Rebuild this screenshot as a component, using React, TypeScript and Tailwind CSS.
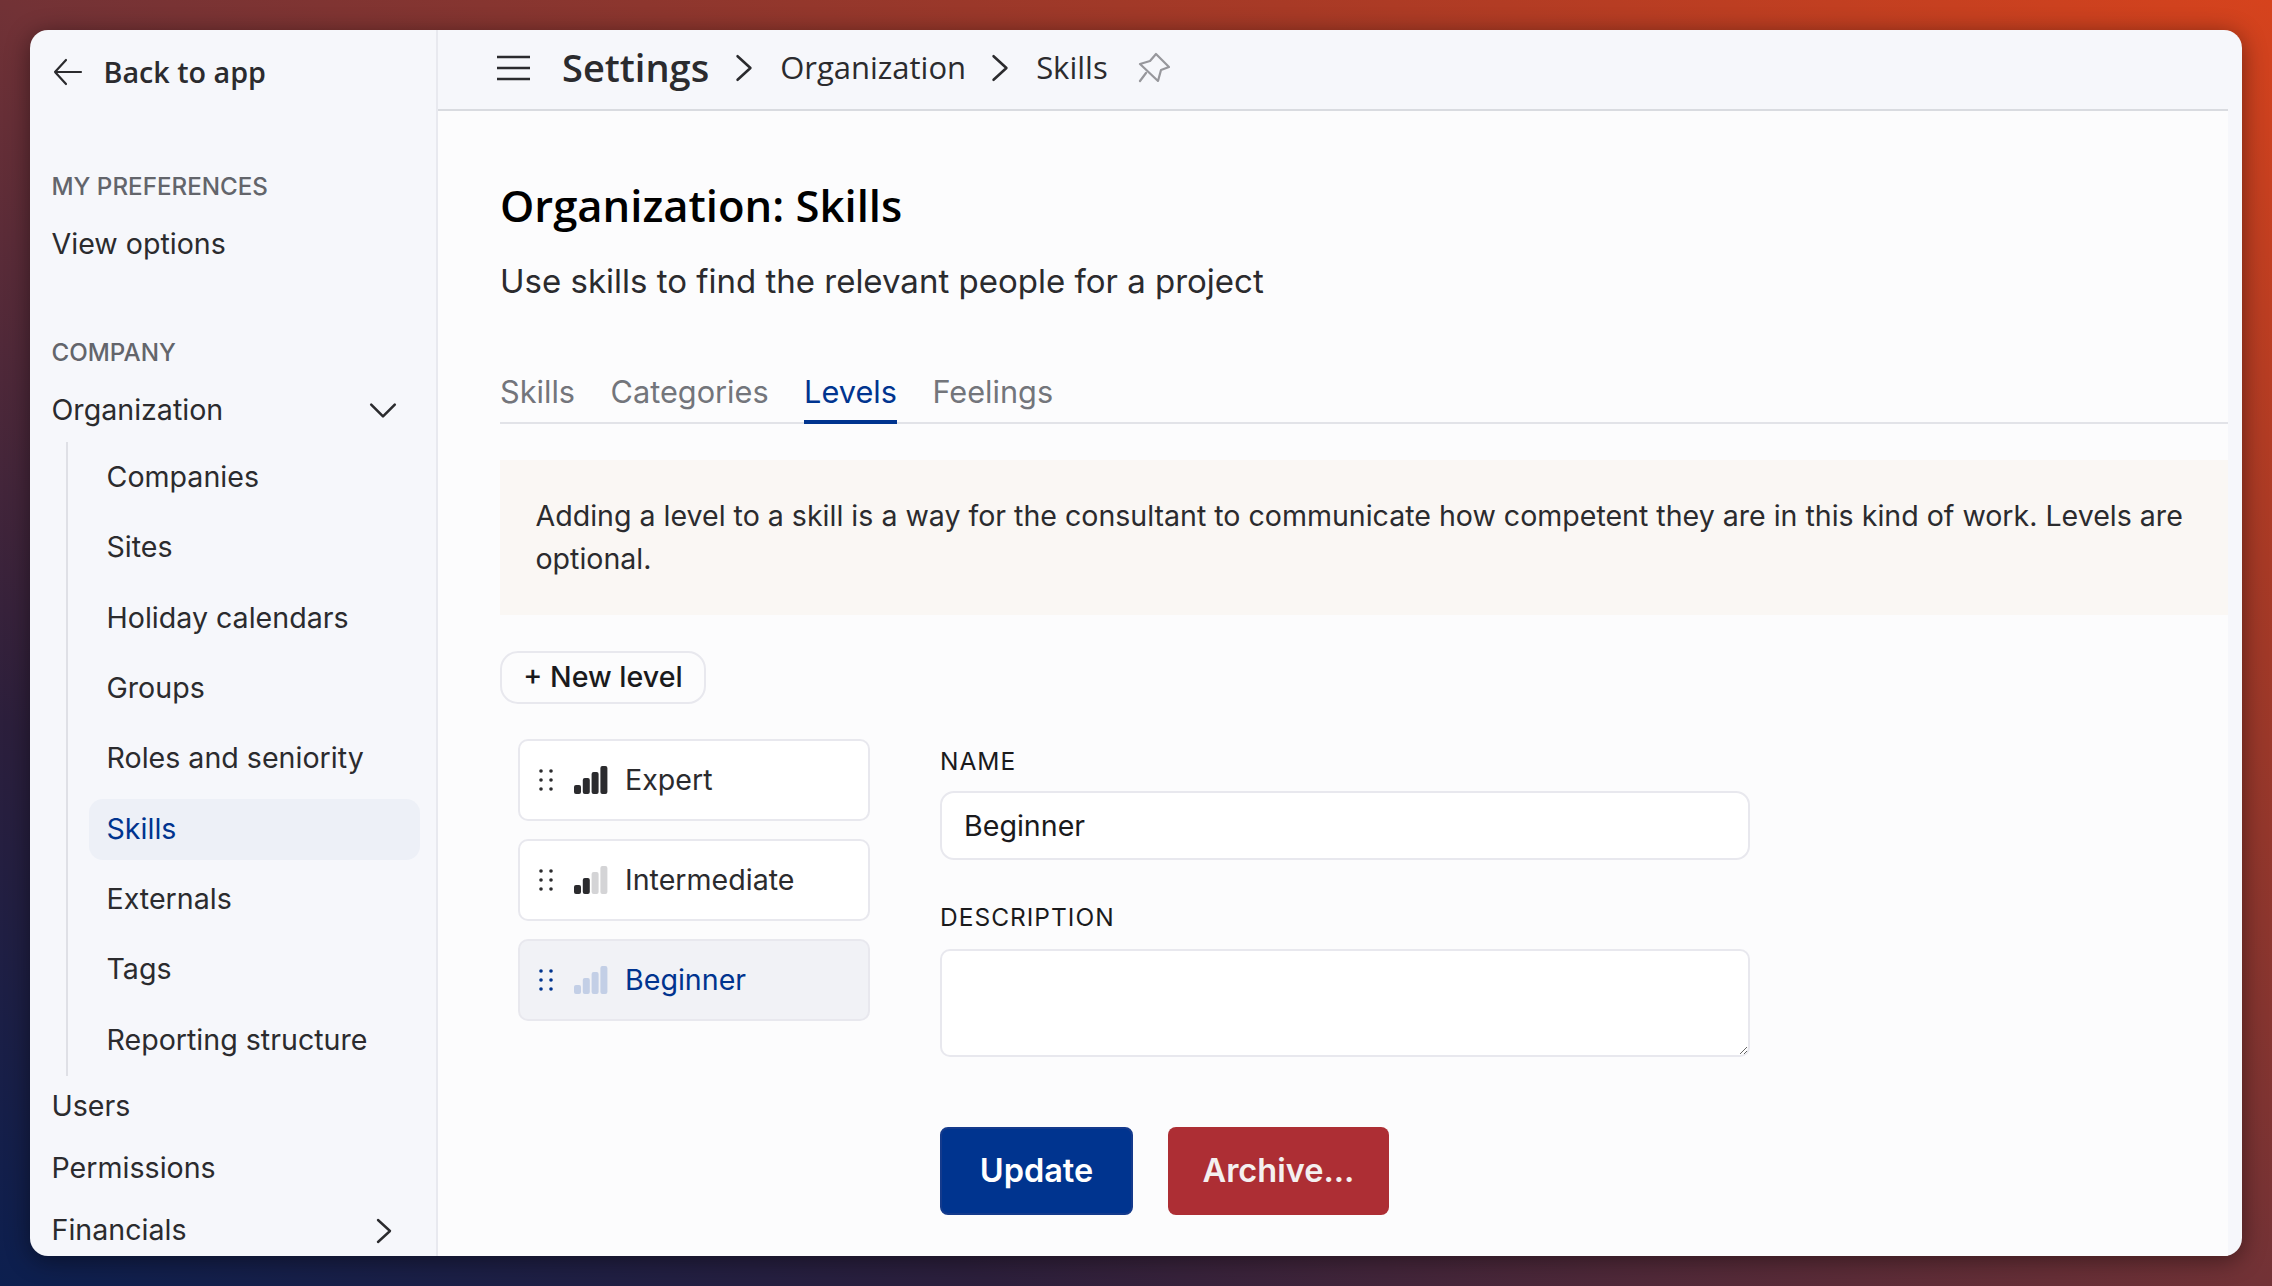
const sans = "font-['Inter',sans-serif]";
const plex = "font-['Open_Sans',sans-serif]";

function Chevron({ dir, className }: { dir: "right" | "down"; className?: string }) {
  return (
    <svg className={className} width="28" height="28" viewBox="0 0 28 28" fill="none" stroke="currentColor" strokeWidth="2.4" strokeLinecap="round" strokeLinejoin="round">
      {dir === "right" ? <path d="M8 3l12 11L8 25" /> : <path d="M3 9l11 11 11-11" />}
    </svg>
  );
}

function NavItem({ label, active }: { label: string; active?: boolean }) {
  return (
    <div className="h-[70.4px] flex items-center">
      <div className={`w-[331px] h-[61px] rounded-[14px] pl-[18px] flex items-center ${active ? "bg-[#edf0f7] text-[#00348f]" : ""}`}>{label}</div>
    </div>
  );
}

function Bars({ level, on, off }: { level: number; on: string; off: string }) {
  const heights = [9, 16, 22, 28];
  return (
    <svg width="34" height="28" viewBox="0 0 34 28" className="shrink-0">
      {heights.map((h, i) => (
        <rect key={i} x={i * 8.8} y={28 - h} width="7" height={h} rx="2" fill={i < level ? on : off} />
      ))}
    </svg>
  );
}

function Grip({ color }: { color: string }) {
  return (
    <svg width="14" height="22" viewBox="0 0 14 22" fill={color} className="shrink-0">
      {[2, 11, 20].map((y) => (
        <g key={y}>
          <circle cx="2" cy={y} r="1.8" />
          <circle cx="12" cy={y} r="1.8" />
        </g>
      ))}
    </svg>
  );
}

function LevelRow({ label, level, on, off, active }: { label: string; level: number; on: string; off: string; active?: boolean }) {
  return (
    <div className={`h-[82px] rounded-[10px] border-2 border-[#e8e8ee] flex items-center pl-[19px] ${active ? "bg-[#f1f2f6] text-[#00348f]" : "bg-white text-[#2b2b2e]"}`}>
      <Grip color={active ? "#00348f" : "#2b2b2e"} />
      <div className="ml-[21px] mr-[17px] flex"><Bars level={level} on={on} off={off} /></div>
      <span>{label}</span>
    </div>
  );
}

export default function App() {
  return (
    <div className={`w-[2272px] h-[1286px] p-[30px] overflow-hidden bg-[linear-gradient(to_top_right,#0c1f4f_0%,#2c1f3c_22%,#723236_50%,#a83a26_78%,#d6431d_100%)] text-[28.6px] text-[#2b2b2e] ${sans}`}>
      <div className="flex h-full rounded-[18px] overflow-hidden bg-[#f6f7fb] shadow-[0_4px_24px_rgba(0,0,0,0.45)]">
        {/* Sidebar */}
        <aside className="w-[408px] shrink-0 border-r-2 border-[#e8e9ef] overflow-hidden pl-[21.5px] pr-[18px]">
          <div className="h-[84px] flex items-center">
            <svg width="30" height="28" viewBox="0 0 30 28" fill="none" stroke="#2b2b2e" strokeWidth="2.2" strokeLinecap="round" strokeLinejoin="round" className="ml-[1px]">
              <path d="M28 14H2M13 2L2 14l11 12" />
            </svg>
            <span className={`ml-[21px] text-[28.7px] font-semibold ${plex}`}>Back to app</span>
          </div>
          <div className="mt-[57px] text-[24.2px] font-medium text-[#63656b] h-[32px] flex items-center">MY PREFERENCES</div>
          <div className="mt-[19px] h-[44px] flex items-center">View options</div>
          <div className="mt-[71px] text-[24.2px] font-medium text-[#63656b] h-[32px] flex items-center">COMPANY</div>
          <div className="mt-[13px] h-[56px] flex items-center justify-between pr-[20px]">
            Organization
            <Chevron dir="down" className="w-[30px] h-[30px]" />
          </div>
          <div className="ml-[14px] border-l-2 border-[#dfe0e6] pl-[21px] mt-[4px] -mr-[18px]">
            {["Companies", "Sites", "Holiday calendars", "Groups", "Roles and seniority"].map((l) => (
              <NavItem key={l} label={l} />
            ))}
            <NavItem label="Skills" active />
            {["Externals", "Tags", "Reporting structure"].map((l) => (
              <NavItem key={l} label={l} />
            ))}
          </div>
          <div className="h-[62px] flex items-center">Users</div>
          <div className="h-[62px] flex items-center">Permissions</div>
          <div className="h-[62px] flex items-center justify-between pr-[20px]">
            Financials
            <Chevron dir="right" />
          </div>
        </aside>

        {/* Right side */}
        <div className="flex-1 min-w-0 flex flex-col pr-[14px]">
          <header className="h-[81px] shrink-0 border-b-2 border-[#d9dbe0] flex items-center pl-[59px] pb-[4px]">
            <svg width="33" height="26" viewBox="0 0 33 26" fill="none" stroke="#2b2b2e" strokeWidth="2.6">
              <path d="M0 2h33M0 13h33M0 24h33" />
            </svg>
            <span className={`ml-[32px] text-[38px] font-semibold ${plex}`}>Settings</span>
            <Chevron dir="right" className="ml-[20px] w-[30px] h-[30px]" />
            <span className={`ml-[21px] text-[31px] ${plex}`}>Organization</span>
            <Chevron dir="right" className="ml-[19px] w-[30px] h-[30px]" />
            <span className={`ml-[21px] text-[31px] ${plex}`}>Skills</span>
            <svg width="32" height="31" viewBox="10 6 32 31" fill="none" stroke="#97979c" strokeWidth="2.2" strokeLinejoin="round" strokeLinecap="round" className="ml-[30px]">
              <path d="M28 8l13 13-8 3-3 11-18-17 10-3zM12 35l6-8" />
            </svg>
          </header>

          <main className="flex-1 min-h-0 bg-[#fcfcfd] pl-[62px] overflow-hidden">
            <h1 className={`mt-[66px] text-[43.6px] leading-[56px] font-semibold text-black ${plex}`}>Organization: Skills</h1>
            <p className="mt-[26px] text-[33px] leading-[44px]">Use skills to find the relevant people for a project</p>

            <div className="mt-[58px] h-[63px] flex gap-[35.5px] border-b-2 border-[#e2e3e8] text-[30.7px] text-[#73757b]">
              <span className="h-[63px] flex items-center">Skills</span>
              <span className="h-[63px] flex items-center">Categories</span>
              <span className="h-[63px] flex items-center text-[#00348f] border-b-4 border-[#00348f] pt-[4px]">Levels</span>
              <span className="h-[63px] flex items-center">Feelings</span>
            </div>

            <div className="mt-[36px] h-[155px] bg-[#faf7f4] pl-[35.5px] pr-[30px] pb-[2px] flex items-center leading-[43px] text-[#2b2b2e] text-[28.56px]">
              Adding a level to a skill is a way for the consultant to communicate how competent they are in this kind of work. Levels are optional.
            </div>

            <button className="mt-[36px] h-[53px] w-[206px] rounded-[18px] border-2 border-[#e8e8ee] font-medium text-[#1a1a1c] block">+ New level</button>

            <div className="flex mt-[35px]">
              <div className="ml-[18px] w-[352px] flex flex-col gap-[18px]">
                <LevelRow label="Expert" level={4} on="#2b2b2e" off="#d4d4d6" />
                <LevelRow label="Intermediate" level={2} on="#2b2b2e" off="#d4d4d6" />
                <LevelRow label="Beginner" level={4} on="#c3cfe6" off="#c3cfe6" active />
              </div>

              <div className="ml-[70px] w-[810px]">
                <label className="block text-[24.5px] leading-[32px] tracking-[1px] text-[#1a1a1c] mt-[6px]">NAME</label>
                <input readOnly value="Beginner" className="mt-[14px] block w-full h-[69px] bg-white rounded-[14px] border-2 border-[#e8e8ee] px-[22px] text-[#1a1a1c]" />
                <label className="block text-[24.5px] leading-[32px] tracking-[1px] text-[#1a1a1c] mt-[41px]">DESCRIPTION</label>
                <textarea readOnly className="mt-[16px] block w-full h-[108px] bg-white rounded-[10px] border-2 border-[#e8e8ee]" />
                <div className="flex gap-[35px] mt-[70px]">
                  <button className="w-[193px] h-[88px] rounded-[8px] bg-[#00348f] border-2 border-[#143a8c] text-white text-[32.5px] font-semibold">Update</button>
                  <button className="w-[221px] h-[88px] rounded-[8px] bg-[#ad2e34] text-[#f4f0f0] text-[32.5px] font-semibold">Archive...</button>
                </div>
              </div>
            </div>
          </main>
        </div>
      </div>
    </div>
  );
}
